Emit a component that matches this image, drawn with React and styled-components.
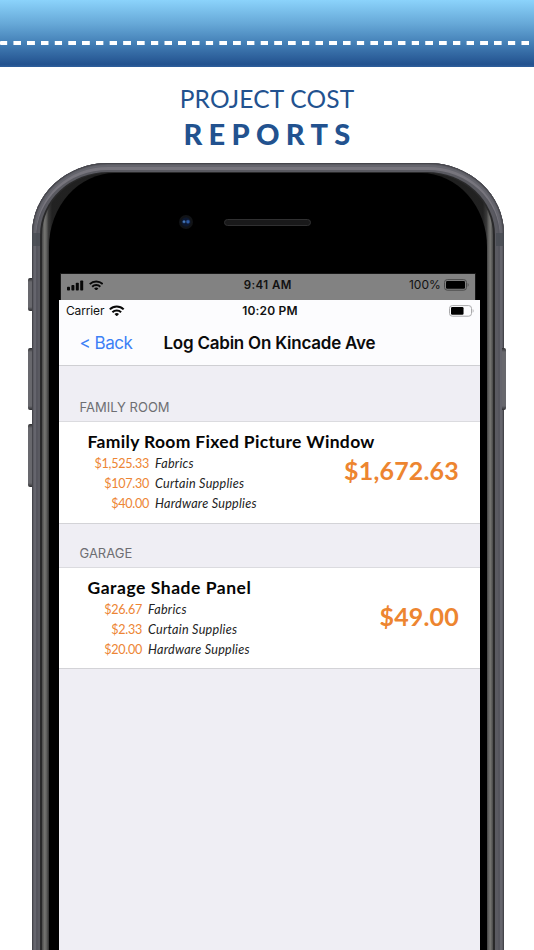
import React from "react";
import styled, { createGlobalStyle } from "styled-components";

const GlobalStyle = createGlobalStyle`
  *, *::before, *::after { box-sizing: border-box; }
  html, body { margin: 0; padding: 0; background: #fff; }
  #root { height: 950px; overflow: hidden; }
`;

const humanist = `Lato, "Liberation Sans", sans-serif`;
const system = `Inter, "Liberation Sans", sans-serif`;

const Page = styled.main`
  display: flex;
  flex-direction: column;
  width: 534px;
  height: 950px;
  overflow: hidden;
  background: #fff;
`;

const DenimBand = styled.div`
  flex: none;
  height: 67px;
  padding-top: 41px;
  background: linear-gradient(#8bd3fb 0%, #67a9d8 35%, #437fb6 65%, #23528f 96%, #2e5f9c 100%);
`;

const Stitching = styled.div`
  height: 4px;
  border-radius: 1px;
  background: repeating-linear-gradient(
    90deg,
    #fff 0 7px,
    transparent 7.6px 13.2px,
    #fff 13.73px
  );
`;

const Heading = styled.h1`
  flex: none;
  height: 96px;
  margin: 0;
  padding-top: 17px;
  display: flex;
  flex-direction: column;
  align-items: center;
  color: #22528f;
  font-family: ${humanist};
  white-space: nowrap;
`;

const HeadingLight = styled.span`
  font-size: 24.5px;
  line-height: 30px;
  font-weight: 400;
  letter-spacing: 0.18px;
`;

const HeadingHeavy = styled.span`
  margin-top: 2px;
  padding-left: 6px;
  font-size: 29px;
  line-height: 36px;
  font-weight: 900;
  letter-spacing: 6.3px;
`;

const Phone = styled.section`
  position: relative;
  flex: none;
  width: 472px;
  height: 860px;
  margin-left: 31.8px;
  padding: 8.5px 8.5px 0;
  border-radius: 76px 76px 0 0 / 71px 71px 0 0;
  background: #5a5a61;
  box-shadow:
    inset 0 0 0 1px #45454b,
    inset 0 0 0 2px #5b5b62,
    inset 0 0 0 4px #65656d,
    inset 0 3px 0 4px #77757d,
    inset 0 0 0 6px #55555d;
`;

const HardwareButton = styled.span`
  position: absolute;
  top: ${(p) => p.$top}px;
  ${(p) => (p.$side === "left" ? "left: -3.5px" : "right: -2.4px")};
  width: 4px;
  height: ${(p) => p.$length}px;
  border-radius: ${(p) => (p.$side === "left" ? "2px 0 0 2px" : "0 2px 2px 0")};
  background: linear-gradient(#2e2e31 0, #68686d 4px, #68686d calc(100% - 4px), #2e2e31 100%);
`;

const AntennaBand = styled.span`
  position: absolute;
  top: 70px;
  ${(p) => p.$side}: 0;
  width: 8px;
  height: 13px;
  background: #474b51;
  opacity: 0.75;
`;

const Rim = styled.div`
  height: 100%;
  padding: 1.5px 2px 0;
  border-radius: 68px 68px 0 0 / 63px 63px 0 0;
  background: #29292a;
`;

const GlassEdge = styled.div`
  height: 100%;
  padding: 0 6.5px;
  border-radius: 66px 66px 0 0 / 62px 62px 0 0;
  background: linear-gradient(
    90deg,
    #484848 0,
    #72726f 2.5px,
    #696967 4px,
    #393939 6.5px,
    #222 10px,
    #111 50%,
    #222 calc(100% - 10px),
    #393939 calc(100% - 6.5px),
    #696967 calc(100% - 4px),
    #72726f calc(100% - 2.5px),
    #484848 100%
  );
`;

const Face = styled.div`
  height: 100%;
  border-radius: 66px 66px 0 0 / 74px 74px 0 0;
  background: #000;
  display: flex;
  flex-direction: column;
`;

const SensorRow = styled.div`
  flex: none;
  height: 100px;
  padding: 42px 0 0 130px;
  display: flex;
  align-items: flex-start;
  gap: 31.5px;
`;

const Camera = styled.span`
  width: 14px;
  height: 14px;
  border-radius: 50%;
  background:
    radial-gradient(circle at 36% 48%, #4476b8 0 0.7px, transparent 2px),
    radial-gradient(circle at 64% 48%, #2d5aa3 0 1px, transparent 2.4px),
    radial-gradient(circle, #0b1730 0 4px, #111316 5px 7px);
`;

const Speaker = styled.span`
  width: 87px;
  height: 7px;
  margin-top: 3.5px;
  border-radius: 4px;
  border: 1px solid #303031;
  background: #19191a;
`;

const DeviceStatus = styled.div`
  flex: none;
  height: 27px;
  width: 416px;
  margin-left: 11px;
  padding: 0 6px;
  border: 1px solid #161616;
  border-width: 1px 1px 0;
  display: grid;
  grid-template-columns: 1fr auto 1fr;
  grid-template-rows: 22px;
  background: #828282;
  color: #111;
  font: 400 12px/22px ${system};
`;

const Screen = styled.div`
  flex: 1;
  width: 421px;
  margin-left: 10.2px;
  background: #efeef4;
  display: flex;
  flex-direction: column;
`;

const AppStatus = styled.div`
  flex: none;
  height: 21px;
  padding: 0 6px 0 7px;
  display: grid;
  grid-template-columns: 1fr auto 1fr;
  background: #fcfcfe;
  color: #111;
  font: 400 12px/21px ${system};
`;

const StatusGroup = styled.div`
  display: flex;
  align-items: center;
  justify-content: ${(p) => (p.$end ? "flex-end" : "flex-start")};
  gap: ${(p) => p.$gap}px;
  letter-spacing: ${(p) => p.$tracking || 0}px;
`;

const Clock = styled.span`
  font-weight: 600;
  font-size: ${(p) => p.$size}px;
  letter-spacing: ${(p) => p.$tracking}px;
`;

const NavBar = styled.header`
  flex: none;
  height: 45px;
  padding-left: 20.5px;
  display: flex;
  border-bottom: 1px solid #cfcfd3;
  background: #fcfcfe;
  font: 400 17px/44px ${system};
  white-space: nowrap;
`;

const BackLink = styled.a`
  width: 84px;
  color: #3c80f6;
  letter-spacing: -0.5px;
`;

const NavTitle = styled.span`
  color: #0b0b0b;
  font-weight: 600;
  letter-spacing: -0.23px;
`;

const SectionTitle = styled.h2`
  flex: none;
  margin: 0;
  height: ${(p) => (p.$first ? 56 : 44)}px;
  padding: ${(p) => (p.$first ? 31 : 18.5)}px 0 0 20.5px;
  border-bottom: 1px solid #dbdbdf;
  color: #6e6e73;
  font: 400 13px/20px ${system};
  letter-spacing: 0;
`;

const ProjectCard = styled.article`
  flex: none;
  height: ${(p) => p.$height}px;
  padding: 8px 21px 0 28.5px;
  border-bottom: 1px solid #d3d3d7;
  display: grid;
  grid-template-rows: 24px 1fr;
  grid-template-columns: 1fr auto;
  background: #fff;
  font-family: ${humanist};
`;

const ProjectName = styled.h3`
  grid-column: 1 / -1;
  margin: 0;
  font-size: 17.5px;
  line-height: 23px;
  font-weight: 700;
  letter-spacing: ${(p) => p.$tracking}px;
  color: #050505;
  white-space: nowrap;
`;

const Breakdown = styled.dl`
  margin: 0 0 0 6.5px;
  display: grid;
  grid-template-columns: ${(p) => p.$amountWidth}px auto;
  grid-auto-rows: 20px;
  align-content: start;
  column-gap: 6px;
  font-size: 12.6px;
  line-height: 20px;
`;

const Amount = styled.dt`
  text-align: right;
  color: #ed8534;
  letter-spacing: -0.28px;
`;

const Category = styled.dd`
  margin: 0;
  color: #222;
  font-style: italic;
  letter-spacing: 0.26px;
`;

const Total = styled.strong`
  margin-top: 1px;
  font-size: 25px;
  line-height: 30px;
  font-weight: 700;
  letter-spacing: 0.18px;
  color: #ed8530;
`;

const Signal = () => (
  <svg width="17" height="11" viewBox="0 0 17 11" fill="#080808">
    <rect x="0" y="6.7" width="3" height="3.8" rx=".8" />
    <rect x="4.4" y="5" width="3" height="5.5" rx=".8" />
    <rect x="8.8" y="2.8" width="3" height="7.7" rx=".8" />
    <rect x="13.2" y=".4" width="3" height="10.1" rx=".8" />
  </svg>
);

const Wifi = ({ width }) => (
  <svg width={width} height={width * 0.74} viewBox="0 0 15 11" fill="none" stroke="#080808" strokeWidth="2">
    <path d="M.8 4.2a9.5 9.5 0 0 1 13.4 0" />
    <path d="M3.3 6.9a6 6 0 0 1 8.4 0" />
    <path d="M7.5 10.9 5.3 8.7a3.2 3.2 0 0 1 4.4 0Z" fill="#080808" stroke="none" />
  </svg>
);

const Battery = ({ level, outline }) => (
  <svg width="25" height="12" viewBox="0 0 25 12">
    <rect x=".5" y=".6" width="22" height="10.6" rx="2.8" fill="none" stroke={outline} />
    <rect x="2" y="2.1" width={19 * level} height="7.6" rx="1.2" fill="#000" />
    <path d="M23.7 4.1c1.2.5 1.2 3.1 0 3.6Z" fill={outline} />
  </svg>
);

const sections = [
  {
    room: "FAMILY ROOM",
    name: "Family Room Fixed Picture Window",
    total: "$1,672.63",
    amountWidth: 55,
    height: 102,
    tracking: 0.33,
    costs: [
      ["$1,525.33", "Fabrics"],
      ["$107.30", "Curtain Supplies"],
      ["$40.00", "Hardware Supplies"],
    ],
  },
  {
    room: "GARAGE",
    name: "Garage Shade Panel",
    total: "$49.00",
    amountWidth: 48,
    height: 101,
    tracking: 0.53,
    costs: [
      ["$26.67", "Fabrics"],
      ["$2.33", "Curtain Supplies"],
      ["$20.00", "Hardware Supplies"],
    ],
  },
];

export default function App() {
  return (
    <>
      <GlobalStyle />
      <Page>
        <DenimBand>
          <Stitching />
        </DenimBand>
        <Heading>
          <HeadingLight>PROJECT COST</HeadingLight>
          <HeadingHeavy>REPORTS</HeadingHeavy>
        </Heading>
        <Phone>
          <HardwareButton $side="left" $top={115} $length={33} />
          <HardwareButton $side="left" $top={185} $length={62} />
          <HardwareButton $side="left" $top={261} $length={63} />
          <HardwareButton $side="right" $top={185} $length={62} />
          <AntennaBand $side="left" />
          <AntennaBand $side="right" />
          <Rim>
            <GlassEdge>
              <Face>
                <SensorRow>
                  <Camera />
                  <Speaker />
                </SensorRow>
                <DeviceStatus>
                  <StatusGroup $gap={5}>
                    <Signal />
                    <Wifi width={14.5} />
                  </StatusGroup>
                  <Clock $size={11.5} $tracking={0.45}>9:41 AM</Clock>
                  <StatusGroup $end $gap={3}>
                    100%
                    <Battery level={1} outline="#4a4a4a" />
                  </StatusGroup>
                </DeviceStatus>
                <Screen>
                  <AppStatus>
                    <StatusGroup $gap={5} $tracking={-0.15}>
                      Carrier
                      <Wifi width={15.5} />
                    </StatusGroup>
                    <Clock $size={12} $tracking={0.2}>10:20 PM</Clock>
                    <StatusGroup $end $gap={0}>
                      <Battery level={0.66} outline="#a9a9ab" />
                    </StatusGroup>
                  </AppStatus>
                  <NavBar>
                    <BackLink>&lt; Back</BackLink>
                    <NavTitle>Log Cabin On Kincade Ave</NavTitle>
                  </NavBar>
                  {sections.map((s, i) => (
                    <React.Fragment key={s.room}>
                      <SectionTitle $first={i === 0}>{s.room}</SectionTitle>
                      <ProjectCard $height={s.height}>
                        <ProjectName $tracking={s.tracking}>{s.name}</ProjectName>
                        <Breakdown $amountWidth={s.amountWidth}>
                          {s.costs.map(([amount, category]) => (
                            <React.Fragment key={category}>
                              <Amount>{amount}</Amount>
                              <Category>{category}</Category>
                            </React.Fragment>
                          ))}
                        </Breakdown>
                        <Total>{s.total}</Total>
                      </ProjectCard>
                    </React.Fragment>
                  ))}
                </Screen>
              </Face>
            </GlassEdge>
          </Rim>
        </Phone>
      </Page>
    </>
  );
}
